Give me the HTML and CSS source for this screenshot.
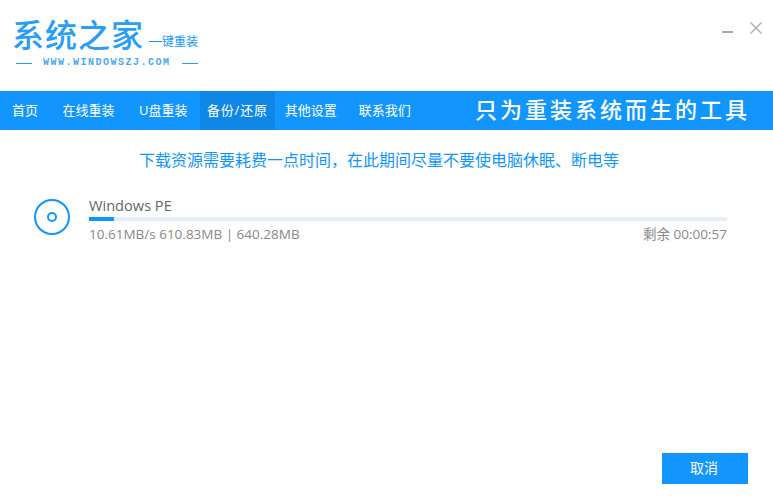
FILE: index.html
```html
<!DOCTYPE html>
<html lang="zh-CN">
<head>
    <meta charset="UTF-8">
    <meta name="viewport" content="width=device-width, initial-scale=1.0">
    <title>系统之家一键重装</title>
    <link rel="stylesheet" href="styles.css">
</head>
<body>
    <div class="app">
        <header class="top">
            <div class="logo">
                <div class="logo-main">
                    <span class="logo-name">系统之家</span>
                    <span class="logo-sub"><i class="logo-dash"></i>键重装</span>
                </div>
                <div class="logo-url">
                    <i class="url-line"></i>
                    <span>WWW.WINDOWSZJ.COM</span>
                    <i class="url-line"></i>
                </div>
            </div>
            <div class="win-btns">
                <i class="win-min"></i>
                <svg class="win-close" width="12" height="12" viewBox="0 0 12 12">
                    <path d="M.5.5l11 11M11.5.5l-11 11" stroke="#aaa" stroke-width="1.4" fill="none"/>
                </svg>
            </div>
        </header>

        <nav class="nav">
            <a class="nav-item">首页</a>
            <a class="nav-item">在线重装</a>
            <a class="nav-item">U盘重装</a>
            <a class="nav-item active">备份/还原</a>
            <a class="nav-item">其他设置</a>
            <a class="nav-item">联系我们</a>
            <span class="slogan">只为重装系统而生的工具</span>
        </nav>

        <main class="content">
            <p class="notice">下载资源需要耗费一点时间，在此期间尽量不要使电脑休眠、断电等</p>

            <div class="task">
                <svg class="disc" width="36" height="36" viewBox="0 0 36 36">
                    <circle cx="18" cy="18" r="17" fill="none" stroke="#1296fe" stroke-width="2"/>
                    <circle cx="18" cy="18" r="4" fill="none" stroke="#1296fe" stroke-width="2"/>
                </svg>
                <div class="task-info">
                    <div class="task-name">Windows PE</div>
                    <div class="bar"><div class="bar-fill" style="width: 3.9%"></div></div>
                    <div class="task-stats">
                        <span>10.61MB/s 610.83MB | 640.28MB</span>
                        <span>剩余 00:00:57</span>
                    </div>
                </div>
            </div>
        </main>

        <footer class="bottom">
            <button class="cancel">取消</button>
        </footer>
    </div>
</body>
</html>
```

FILE: styles.css
```css
* {
    box-sizing: border-box;
}

body {
    margin: 0;
    background: #fff;
    font-family: "Open Sans", "Noto Sans CJK SC", sans-serif;
}

.app {
    width: 773px;
    height: 496px;
    display: flex;
    flex-direction: column;
    overflow: hidden;
}

.top {
    height: 91px;
    display: flex;
    justify-content: space-between;
    padding: 16px 11px 0 12px;
}

.logo-main {
    display: flex;
    align-items: flex-end;
    height: 35px;
    color: #2a9df4;
}

.logo-name {
    font-size: 32px;
    line-height: 35px;
    letter-spacing: 1px;
    font-family: "Noto Sans CJK SC", sans-serif;
    font-weight: 500;
}

.logo-sub {
    display: flex;
    align-items: center;
    margin: 0 0 2px 5px;
    font-size: 12px;
    line-height: 16px;
    color: #1296fe;
    font-family: "Noto Sans CJK SC", sans-serif;
}

.logo-dash {
    width: 13px;
    height: 1px;
    background: #1296fe;
}

.logo-url {
    display: flex;
    align-items: center;
    gap: 11px;
    margin: 6px 0 0 4px;
    font-family: "Liberation Mono", monospace;
    font-size: 10px;
    font-weight: bold;
    letter-spacing: 1.5px;
    line-height: 12px;
    color: #4aa8f2;
}

.url-line {
    width: 16px;
    height: 1px;
    background: #2a9df4;
}

.win-btns {
    display: flex;
    align-items: flex-start;
    gap: 17px;
    padding-top: 6px;
}

.win-min {
    width: 11px;
    height: 2px;
    margin-top: 9px;
    background: #aaa;
}

.nav {
    height: 39px;
    display: flex;
    align-items: center;
    background: #1296fe;
    color: #fff;
    font-size: 13px;
    padding-left: 5px;
}

.nav-item {
    height: 100%;
    display: flex;
    align-items: center;
    padding: 0 7px 3px;
    margin-right: 10.5px;
}

.nav-item.active {
    background: #0f87e6;
    margin: 0 3px 0 -5px;
    letter-spacing: 0.8px;
}

.nav-item.active + .nav-item {
    margin-right: 8px;
}

.slogan {
    margin-left: auto;
    margin-right: 23px;
    padding-bottom: 5px;
    font-size: 22px;
    letter-spacing: 3px;
    font-weight: 500;
}

.content {
    flex: 1;
    padding: 0 46px 0 34px;
}

.notice {
    margin: 20px 0 0;
    padding-left: 105px;
    font-size: 16px;
    line-height: 20px;
    color: #1296fe;
}

.task {
    display: flex;
    gap: 19px;
    margin-top: 25px;
    align-items: flex-start;
}

.disc {
    flex: none;
    margin-top: 4px;
}

.task-info {
    flex: 1;
}

.task-name {
    font-size: 14.6px;
    line-height: 20px;
    color: #666;
}

.bar {
    height: 4px;
    margin-top: 2px;
    background: #e8eef9;
}

.bar-fill {
    height: 100%;
    background: #1296fe;
}

.task-stats {
    display: flex;
    justify-content: space-between;
    margin-top: 3px;
    font-size: 13.5px;
    line-height: 20px;
    color: #888;
}

.bottom {
    display: flex;
    justify-content: flex-end;
    padding: 0 25px 12px 0;
}

.cancel {
    width: 86px;
    height: 31px;
    border: none;
    padding: 0 2px 3px 0;
    background: #1296fe;
    color: #fff;
    font-family: inherit;
    font-size: 14px;
}
```
